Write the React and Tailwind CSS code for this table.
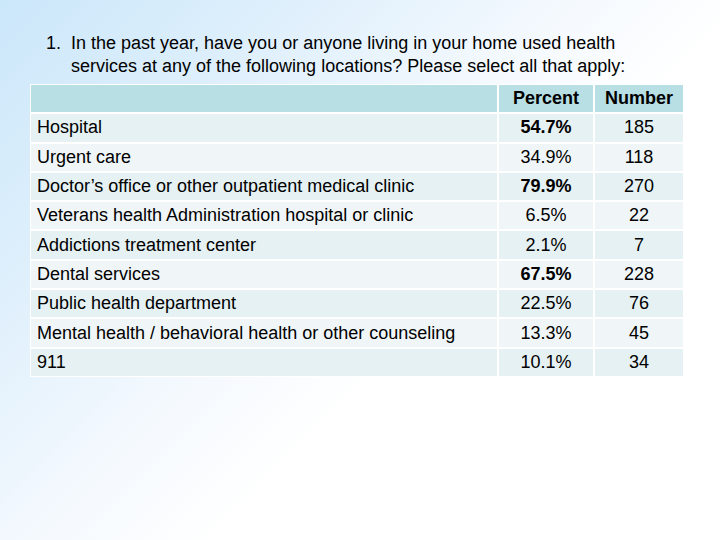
const rows = [
  { label: 'Hospital', pct: '54.7%', num: '185', bold: true },
  { label: 'Urgent care', pct: '34.9%', num: '118' },
  { label: 'Doctor’s office or other outpatient medical clinic', pct: '79.9%', num: '270', bold: true },
  { label: 'Veterans health Administration hospital or clinic', pct: '6.5%', num: '22' },
  { label: 'Addictions treatment center', pct: '2.1%', num: '7' },
  { label: 'Dental services', pct: '67.5%', num: '228', bold: true },
  { label: 'Public health department', pct: '22.5%', num: '76' },
  { label: 'Mental health / behavioral health or other counseling', pct: '13.3%', num: '45' },
  { label: '911', pct: '10.1%', num: '34' },
];

function App() {
  return (
    <div className="w-[720px] h-[540px] overflow-hidden bg-[linear-gradient(135deg,#cbe7fa_0%,#e0f0fc_25%,#f4f9fe_45%,#ffffff_60%)] font-['Liberation_Sans',Arial,sans-serif] text-black">
      <div className="flex pt-[32px] pl-[46px] text-[18px] leading-[23px]">
        <span className="w-[25px] shrink-0">1.</span>
        <p className="w-[600px]">
          In the past year, have you or anyone living in your home used health services at any of the following locations? Please select all that apply:
        </p>
      </div>

      <div className="ml-[30px] mt-[6px] w-[654px] bg-white p-px grid grid-cols-[466px_94px_88px] gap-x-[2px] gap-y-[2px] auto-rows-[27.3px] text-[18px]">
        <div className="bg-[#b8dfe4]" />
        <div className="bg-[#b8dfe4] flex items-center justify-center font-bold">Percent</div>
        <div className="bg-[#b8dfe4] flex items-center justify-center font-bold">Number</div>
        {rows.map((r, i) => {
          const bg = i % 2 === 0 ? 'bg-[#e5f1f3]' : 'bg-[#f0f6f8]';
          return [
            <div key={r.label} className={`${bg} flex items-center pl-[6px]`}>{r.label}</div>,
            <div key={r.label + 'p'} className={`${bg} flex items-center justify-center ${r.bold ? 'font-bold' : ''}`}>{r.pct}</div>,
            <div key={r.label + 'n'} className={`${bg} flex items-center justify-center`}>{r.num}</div>,
          ];
        })}
      </div>
    </div>
  );
}

export default App;
